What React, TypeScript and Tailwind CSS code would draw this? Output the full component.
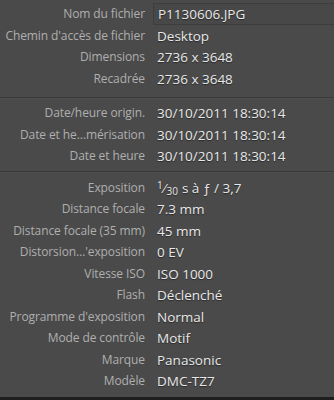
import React from "react";

type Row = { label: string; value: React.ReactNode };

const fileRows: Row[] = [
  { label: "Chemin d'accès de fichier", value: "Desktop" },
  { label: "Dimensions", value: "2736 x 3648" },
  { label: "Recadrée", value: "2736 x 3648" },
];

const dateRows: Row[] = [
  { label: "Date/heure origin.", value: "30/10/2011 18:30:14" },
  { label: "Date et he…mérisation", value: "30/10/2011 18:30:14" },
  { label: "Date et heure", value: "30/10/2011 18:30:14" },
];

const exposure = (
  <span className="inline-flex items-center">
    <span className="relative -top-[3px] text-[10px]">1</span>
    <span className="mx-[1px]">⁄</span>
    <span className="relative top-[3px] text-[10px]">30</span>
    <span className="ml-[4px]">s à ƒ / 3,7</span>
  </span>
);

const cameraRows: Row[] = [
  { label: "Exposition", value: exposure },
  { label: "Distance focale", value: "7.3 mm" },
  { label: "Distance focale (35 mm)", value: "45 mm" },
  { label: "Distorsion…'exposition", value: "0 EV" },
  { label: "Vitesse ISO", value: "ISO 1000" },
  { label: "Flash", value: "Déclenché" },
  { label: "Programme d'exposition", value: "Normal" },
  { label: "Mode de contrôle", value: "Motif" },
  { label: "Marque", value: "Panasonic" },
  { label: "Modèle", value: "DMC-TZ7" },
];

function MetaRow({ label, value }: Row) {
  return (
    <div className="flex h-[21.5px] items-center">
      <div className="w-[145px] shrink-0 text-right text-[12px] tracking-[-0.1px] text-[#afafaf] whitespace-nowrap">
        {label}
      </div>
      <div className="pl-[12px] text-[13.5px] text-[#e8e8e8] whitespace-nowrap [text-shadow:0_1px_1px_rgba(0,0,0,0.45)]">
        {value}
      </div>
    </div>
  );
}

function Divider() {
  return <div className="h-[2px] w-full border-t border-[#393939] bg-[#4f4f4f]" />;
}

export default function App() {
  return (
    <div
      className="relative flex h-[400px] w-[334px] flex-col overflow-hidden bg-[#4a4a4a]"
      style={{ fontFamily: '"Open Sans", "Liberation Sans", sans-serif' }}
    >
      <div className="pt-[3px]">
        {/* editable file name */}
        <div className="flex h-[22px] items-center">
          <div className="w-[145px] shrink-0 text-right text-[12px] tracking-[-0.1px] text-[#afafaf]">
            Nom du fichier
          </div>
          <div className="ml-[8px] flex h-[22px] flex-1 items-center border border-r-0 border-[#3d3d3d] bg-[#484848] pl-[4px] text-[13.5px] text-[#e8e8e8] [text-shadow:0_1px_1px_rgba(0,0,0,0.45)]">
            P1130606.JPG
          </div>
        </div>
        {fileRows.map((r) => (
          <MetaRow key={r.label} {...r} />
        ))}
      </div>

      <div className="mt-[7px]">
        <Divider />
      </div>

      <div className="pt-[4px]">
        {dateRows.map((r) => (
          <MetaRow key={r.label} {...r} />
        ))}
      </div>

      <div className="mt-[4px]">
        <Divider />
      </div>

      <div className="pt-[4px]">
        {cameraRows.map((r) => (
          <MetaRow key={r.label} {...r} />
        ))}
      </div>

      {/* panel bottom edge */}
      <div className="mt-auto h-[3px] w-full bg-[#1e1e1e]" />
    </div>
  );
}
